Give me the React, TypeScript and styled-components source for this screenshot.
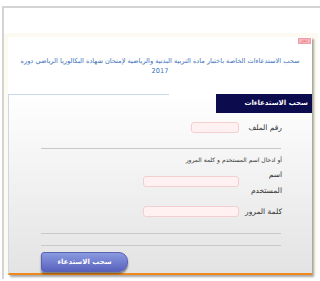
import styled, { createGlobalStyle } from "styled-components"

const GlobalStyle = createGlobalStyle`
  html, body {
    margin: 0;
    padding: 0;
    background: #fff;
  }
  body {
    font-family: "DejaVu Sans", "Noto Sans", sans-serif;
  }
`

export default function App() {
  return (
    <>
      <GlobalStyle />
      <Frame>
        <Strip>
          <Card>
            <CloseBar>
              <CloseButton>إغلاق</CloseButton>
            </CloseBar>
            <Title>
              سحب الاستدعاءات الخاصة باختبار مادة التربية البدنية والرياضية لإمتحان شهادة البكالوريا الرياضي دورة 2017
            </Title>

            <FormBox>
              <Tab>سحب الاستدعاءات</Tab>

              <FieldRow $top={7}>
                <Label>رقم الملف</Label>
                <Input $width={48} $top={2} />
              </FieldRow>

              <Rule $top={12} />
              <Note>أو ادخال اسم المستخدم و كلمة المرور</Note>

              <FieldRow $top={2}>
                <Label>
                  اسم
                  <br />
                  المستخدم
                </Label>
                <Input $width={96} $top={9} />
              </FieldRow>

              <FieldRow $top={5}>
                <Label>كلمة المرور</Label>
                <Input $width={96} $top={2} />
              </FieldRow>

              <Rule $top={13} />
              <Rule $top={11} />

              <ButtonRow>
                <SubmitButton>سحب الاستدعاء</SubmitButton>
              </ButtonRow>
            </FormBox>
          </Card>
        </Strip>
      </Frame>
    </>
  )
}

const Frame = styled.div`
  margin: 6px 0 0 2px;
  border-top: 2px solid #d4d4d4;
  border-left: 2px solid #d4d4d4;
  padding-top: 25px;
  height: 273px;
  box-sizing: border-box;
`

const Strip = styled.div`
  background: #fdfbf1;
  padding: 4px 0 0 4px;
  width: 310px;
`

const Card = styled.div`
  background: #fff;
  width: 304px;
  box-shadow: 2px 2px 2px rgba(0, 0, 0, 0.35);
`

const CloseBar = styled.div`
  display: flex;
  justify-content: flex-end;
  padding-top: 1px;
`

const CloseButton = styled.div`
  width: 13px;
  height: 6px;
  background: #f8b7bf;
  border: 1px solid #f29aa6;
  box-sizing: border-box;
  font-size: 3px;
  line-height: 4px;
  color: #d66;
  text-align: center;
  overflow: hidden;
  margin-right: 1px;
`

const Title = styled.div`
  direction: rtl;
  text-align: center;
  color: #3a70ba;
  font-size: 6.6px;
  line-height: 9.5px;
  padding: 13px 5px 0 5px;
`

const FormBox = styled.div`
  direction: rtl;
  margin-top: 27px;
  border-left: 1px solid #c9d8ec;
  border-bottom: 2px solid #f0891d;
  background:
    linear-gradient(to right, #c9d8ec 160px, transparent 160px) top / 100% 1px no-repeat,
    linear-gradient(#ffffff, #e3e3e3);
  padding-bottom: 1px;
`

const Tab = styled.div`
  width: 96px;
  height: 19px;
  margin-top: -9px;
  background: #0b0b4d;
  color: #fff;
  font-size: 7px;
  font-weight: bold;
  line-height: 19px;
  padding-right: 4px;
  box-sizing: border-box;
`

const FieldRow = styled.div<{ $top: number }>`
  display: flex;
  align-items: flex-start;
  gap: 3px;
  margin-top: ${(p) => p.$top}px;
  padding-right: 30px;
`

const Label = styled.div`
  width: 40px;
  font-size: 7.5px;
  line-height: 16px;
  white-space: nowrap;
  color: #333;
`

const Input = styled.div<{ $width: number; $top: number }>`
  width: ${(p) => p.$width}px;
  height: 11px;
  margin-top: ${(p) => p.$top}px;
  box-sizing: border-box;
  background: #fff1f1;
  border: 1px solid #f3cfcf;
  border-radius: 3px;
`

const Rule = styled.div<{ $top: number }>`
  height: 1px;
  background: #c8c8c8;
  margin: ${(p) => p.$top}px 31px 0 32px;
`

const Note = styled.div`
  font-size: 6px;
  line-height: 10px;
  color: #333;
  margin-top: 6px;
  padding-right: 30px;
`

const ButtonRow = styled.div`
  display: flex;
  justify-content: flex-end;
  padding-left: 32px;
  margin-top: 6px;
`

const SubmitButton = styled.button`
  width: 87px;
  height: 20px;
  border: 1px solid #5a62b4;
  border-radius: 3px 9px 9px 3px;
  background: linear-gradient(#8a9ae0, #5a62bd);
  color: #fff;
  font-family: "DejaVu Sans", sans-serif;
  font-size: 7px;
  font-weight: bold;
  letter-spacing: 1.8px;
  box-shadow: 0 2px 2px rgba(0, 0, 0, 0.45);
  padding: 0;
`
